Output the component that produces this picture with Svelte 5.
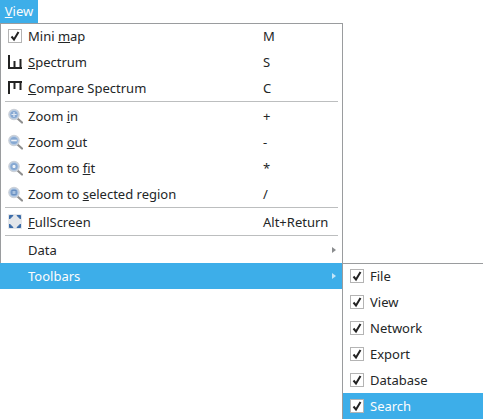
<script>
  const main = [
    { label: 'Mini ', mn: 'm', rest: 'ap', key: 'M', icon: 'check' },
    { mn: 'S', rest: 'pectrum', key: 'S', icon: 'spectrum' },
    { mn: 'C', rest: 'ompare Spectrum', key: 'C', icon: 'compare' },
    { sep: true },
    { label: 'Zoom ', mn: 'i', rest: 'n', key: '+', icon: 'plus' },
    { label: 'Zoom ', mn: 'o', rest: 'ut', key: '-', icon: 'minus' },
    { label: 'Zoom to ', mn: 'f', rest: 'it', key: '*', icon: 'fit' },
    { label: 'Zoom to ', mn: 's', rest: 'elected region', key: '/', icon: 'region' },
    { sep: true },
    { mn: 'F', rest: 'ullScreen', key: 'Alt+Return', icon: 'full' },
    { sep: true },
    { label: 'Data', arrow: true },
    { label: 'Toolbars', arrow: true, active: true },
  ];
  const toolbars = ['File', 'View', 'Network', 'Export', 'Database', 'Search'];
</script>

{#snippet checkbox()}
  <svg class="check" width="14" height="14" viewBox="0 0 14 14">
    <rect x="0.5" y="0.5" width="13" height="13" fill="#fff" stroke="#b4b4b4" />
    <path d="M3.5 7.5 L6 10.5 L10.5 3" fill="none" stroke="#222" stroke-width="2" />
  </svg>
{/snippet}

{#snippet lens(kind)}
  <svg width="16" height="16" viewBox="0 0 16 16">
    <path d="M10.5 10.5 L15 14.5" stroke="#8f8f8f" stroke-width="2.2" stroke-linecap="round" />
    <circle cx="7" cy="6.5" r="5.2" fill="#b4c9e2" stroke="#ccd1d8" stroke-width="1.2" />
    <circle cx="7" cy="6.5" r="3.6" fill="#86a8d2" />
    {#if kind === 'plus'}
      <path d="M4.5 6.5 H9.5 M7 4 V9" stroke="#dfe8f3" stroke-width="1.2" />
    {:else if kind === 'minus'}
      <path d="M4.2 6.5 H9.8" stroke="#eef2f7" stroke-width="1.6" />
    {:else if kind === 'fit'}
      <path d="M5.5 6.5 H8.5 M7 5 V8" stroke="#eef2f7" stroke-width="2" />
    {:else}
      <rect x="5" y="4.5" width="4" height="4" fill="#a9c2df" stroke="#5f88bc" stroke-width="0.8" />
    {/if}
  </svg>
{/snippet}

{#snippet icon(name)}
  {#if name === 'check'}
    {@render checkbox()}
  {:else if name === 'spectrum'}
    <svg width="16" height="16" viewBox="0 0 16 16">
      <path d="M2 1 V14 H15 M7.5 14 V7 M13.5 14 V5" fill="none" stroke="#222" stroke-width="2" />
    </svg>
  {:else if name === 'compare'}
    <svg width="16" height="16" viewBox="0 0 16 16">
      <path d="M2 14 V2 H15 M7.5 2 V9 M13.5 2 V10" fill="none" stroke="#222" stroke-width="2" />
    </svg>
  {:else if name === 'full'}
    <svg width="16" height="16" viewBox="0 0 16 16">
      <rect x="1" y="0" width="14" height="15" rx="1" fill="#e3e6ea" />
      <path d="M2.5 1.5 H6 L2.5 5 Z M13.5 1.5 H10 L13.5 5 Z M2.5 13.5 H6 L2.5 10 Z M13.5 13.5 H10 L13.5 10 Z" fill="#3a6ba8" stroke="#3a6ba8" />
    </svg>
  {:else}
    {@render lens(name)}
  {/if}
{/snippet}

<div class="page">
  <div class="menubar">
    <span class="top"><u>V</u>iew</span>
  </div>

  <div class="menu">
    {#each main as item}
      {#if item.sep}
        <div class="sep"></div>
      {:else}
        <div class="row" class:active={item.active}>
          <span class="ico">
            {#if item.icon}{@render icon(item.icon)}{/if}
          </span>
          <span class="label">{item.label ?? ''}{#if item.mn}<u>{item.mn}</u>{item.rest}{/if}</span>
          {#if item.key}<span class="key">{item.key}</span>{/if}
          {#if item.arrow}<span class="arrow"></span>{/if}
        </div>
      {/if}
    {/each}
  </div>

  <div class="submenu">
    {#each toolbars as name, i}
      <div class="row" class:active={i === toolbars.length - 1}>
        <span class="ico">{@render checkbox()}</span>
        <span class="label">{name}</span>
      </div>
    {/each}
  </div>
</div>

<style>
  :global(body) {
    margin: 0;
    background: #fff;
  }

  .page {
    position: relative;
    width: 483px;
    height: 419px;
    overflow: hidden;
    font-family: "Noto Sans", sans-serif;
    font-size: 13px;
    color: #232627;
  }

  .menubar {
    height: 23px;
    display: flex;
  }

  .top {
    width: 38px;
    height: 23px;
    line-height: 23px;
    text-align: center;
    background: #3daee9;
    color: #fcfcfc;
  }

  .menu {
    width: 343px;
    height: 266px;
    box-sizing: border-box;
    border: 1px solid #9a9c9e;
    border-bottom: none;
    background: #fff;
  }

  /* first row sits under the frame line */
  .menu .row:first-child,
  .submenu .row:first-child {
    margin-top: -1px;
  }

  .row {
    display: flex;
    align-items: center;
    height: 26px;
    position: relative;
  }

  .row.active {
    background: #3daee9;
    color: #fcfcfc;
  }

  .menu .row.active {
    margin-left: -1px;
    padding-left: 1px;
  }

  .ico {
    width: 27px;
    flex-shrink: 0;
    display: flex;
    align-items: center;
    justify-content: center;
    padding-left: 1px;
    box-sizing: border-box;
  }

  .label {
    width: 235px;
    white-space: nowrap;
  }

  .sep {
    height: 1px;
    margin: 0 4px 1px;
    background: #bcbebf;
  }

  .arrow {
    position: absolute;
    right: 6px;
    top: 10px;
    border-left: 4px solid #8a8c8e;
    border-top: 3.5px solid transparent;
    border-bottom: 3.5px solid transparent;
  }

  .active .arrow {
    border-left-color: #c4e5f8;
  }

  .submenu {
    position: absolute;
    left: 342px;
    top: 263px;
    width: 141px;
    height: 156px;
    box-sizing: border-box;
    border-top: 1px solid #9a9c9e;
    border-left: 1px solid #9a9c9e;
    background: #fff;
  }

  .submenu .label {
    width: auto;
  }

  .check {
    display: block;
  }
</style>
